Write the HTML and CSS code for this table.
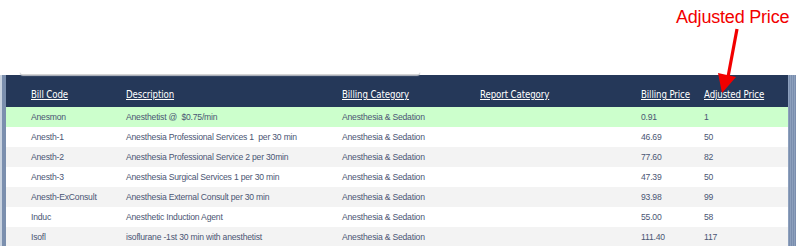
FILE: index.html
```html
<!DOCTYPE html>
<html>
<head>
<meta charset="utf-8">
<link rel="stylesheet" href="styles.css">
</head>
<body>
<div class="page">
  <div class="top">
    <div class="search-edge"></div>
    <div class="note">
      <span class="note-text">Adjusted Price</span>
      <svg class="arrow" width="60" height="70" viewBox="0 0 60 70">
        <line x1="47" y1="2" x2="38" y2="50" stroke="#f20000" stroke-width="3.2"/>
        <polygon points="28,46 46,50 32,66" fill="#f20000"/>
      </svg>
    </div>
  </div>
  <div class="frame">
    <div class="strip-left"></div>
    <div class="table">
      <div class="row head">
        <span><u>Bill Code</u></span>
        <span><u>Description</u></span>
        <span><u>Billing Category</u></span>
        <span><u>Report Category</u></span>
        <span><u>Billing Price</u></span>
        <span><u>Adjusted Price</u></span>
      </div>
      <div class="row sel">
        <span>Anesmon</span><span>Anesthetist @&nbsp; $0.75/min</span><span>Anesthesia &amp; Sedation</span><span></span><span>0.91</span><span>1</span>
      </div>
      <div class="row">
        <span>Anesth-1</span><span>Anesthesia Professional Services 1&nbsp; per 30 min</span><span>Anesthesia &amp; Sedation</span><span></span><span>46.69</span><span>50</span>
      </div>
      <div class="row alt">
        <span>Anesth-2</span><span>Anesthesia Professional Service 2 per 30min</span><span>Anesthesia &amp; Sedation</span><span></span><span>77.60</span><span>82</span>
      </div>
      <div class="row">
        <span>Anesth-3</span><span>Anesthesia Surgical Services 1 per 30 min</span><span>Anesthesia &amp; Sedation</span><span></span><span>47.39</span><span>50</span>
      </div>
      <div class="row alt">
        <span>Anesth-ExConsult</span><span>Anesthesia External Consult per 30 min</span><span>Anesthesia &amp; Sedation</span><span></span><span>93.98</span><span>99</span>
      </div>
      <div class="row">
        <span>Induc</span><span>Anesthetic Induction Agent</span><span>Anesthesia &amp; Sedation</span><span></span><span>55.00</span><span>58</span>
      </div>
      <div class="row alt">
        <span>Isofl</span><span>isoflurane -1st 30 min with anesthetist</span><span>Anesthesia &amp; Sedation</span><span></span><span>111.40</span><span>117</span>
      </div>
    </div>
    <div class="scrollbar"></div>
  </div>
</div>
</body>
</html>
```

FILE: styles.css
```css
html, body {
  margin: 0;
  padding: 0;
  background: #ffffff;
}
.page {
  width: 805px;
  height: 246px;
  overflow: hidden;
  position: relative;
}
.top {
  height: 75px;
  position: relative;
}
.search-edge {
  position: absolute;
  left: 20px;
  top: 71px;
  width: 400px;
  height: 3px;
  border-bottom: 1px solid #d4d4d4;
  border-radius: 0 0 3px 3px;
  box-shadow: 0 1px 1px #b8bcc4;
  background: #ffffff;
}
.note {
  position: absolute;
  left: 676px;
  top: 4px;
  width: 120px;
  height: 100px;
  z-index: 2;
}
.note-text {
  display: block;
  font-family: "Liberation Sans", Arial, sans-serif;
  font-size: 18px;
  color: #f20000;
  line-height: 26px;
  letter-spacing: -0.2px;
}
.arrow {
  position: absolute;
  left: 14px;
  top: 23px;
}
.frame {
  display: flex;
  height: 171px;
}
.strip-left {
  width: 6px;
  background: linear-gradient(to right, #c9d3e0 0, #c9d3e0 2px, #7b8fae 2px, #7b8fae 6px);
}
.table {
  width: 782px;
  background: #ffffff;
}
.row {
  display: grid;
  grid-template-columns: 95px 216px 138px 161px 63px 1fr;
  padding-left: 25px;
  height: 20px;
  align-items: center;
  font-family: "Liberation Sans", Arial, sans-serif;
  font-size: 8.6px;
  letter-spacing: -0.2px;
  color: #4a5573;
  white-space: nowrap;
}
.row.head {
  height: 32px;
  background: #253859;
  color: #ffffff;
  font-family: "DejaVu Sans Condensed", "DejaVu Sans", sans-serif;
  font-size: 9.6px;
  letter-spacing: -0.1px;
  align-items: end;
  padding-bottom: 7px;
  box-sizing: border-box;
}
.row.sel {
  background: #ccffcc;
}
.row.alt {
  background: #f3f3f3;
}
.scrollbar {
  width: 8px;
  background: repeating-linear-gradient(to right, #8da0bd 0, #8da0bd 1px, #7a8eae 1px, #7a8eae 2px);
}
```
